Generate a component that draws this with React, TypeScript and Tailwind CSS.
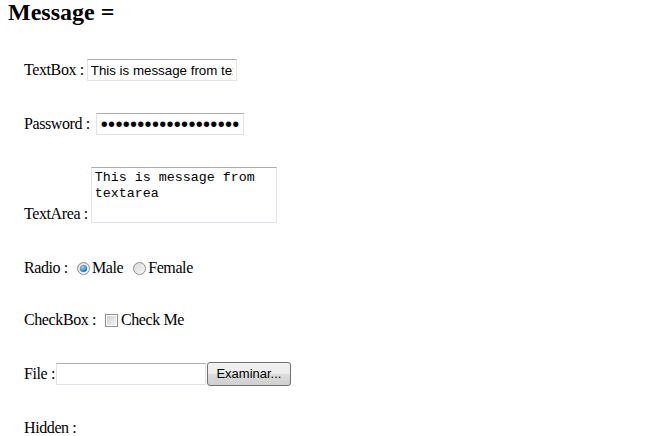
const label = "whitespace-pre leading-[18px] tracking-[-0.4px]";
const field =
  "border border-[#e2e3ea] border-t-[#abadb3] bg-white text-black outline-none";

function Radio({ checked }: { checked?: boolean }) {
  return (
    <span className="flex h-[13px] w-[13px] shrink-0 items-center justify-center rounded-full border border-[#8e8f8f] bg-[linear-gradient(135deg,#d7d7d7,#f8f8f8)]">
      {checked && (
        <span className="h-[7px] w-[7px] rounded-full bg-[radial-gradient(circle_at_40%_35%,#9fdcf8,#2a8ac4_55%,#0d4f80)]" />
      )}
    </span>
  );
}

export default function App() {
  return (
    <div className="h-[436px] w-[650px] overflow-hidden bg-white px-2 font-['Liberation_Serif','Times_New_Roman',serif] text-[16px] text-black">
      <h2 className="text-[24px] font-bold leading-[24px]">Message =</h2>

      <div className="ml-4 flex flex-col">
        <div className="mt-[35px] flex h-[22px] items-center">
          <span className={label}>TextBox :</span>
          <input
            readOnly
            value="This is message from textbox"
            className={`${field} ml-[3px] h-[22px] w-[150px] px-[3px] font-['Liberation_Sans',Arial,sans-serif] text-[13.33px]`}
          />
        </div>

        <div className="mt-[32px] flex h-[22px] items-center">
          <span className={label}>Password :</span>
          <input
            readOnly
            value={"•".repeat(19)}
            className={`${field} ml-[6px] h-[22px] w-[148px] pl-[4px] font-['Liberation_Sans',Arial,sans-serif] text-[20px] tracking-[0.3px]`}
          />
        </div>

        <div className="mt-[32px] flex h-[56px] items-end">
          <span className={label}>TextArea :</span>
          <textarea
            readOnly
            value="This is message from textarea"
            className={`${field} ml-[3px] h-[56px] w-[186px] resize-none overflow-hidden px-[3px] pt-[2px] font-['Liberation_Mono','Courier_New',monospace] text-[13.33px] leading-[16px]`}
          />
        </div>

        <div className="mt-[36px] flex h-[18px] items-center">
          <span className={label}>Radio :</span>
          <span className="ml-[9px]">
            <Radio checked />
          </span>
          <span className={`${label} ml-[2px]`}>Male</span>
          <span className="ml-[10px]">
            <Radio />
          </span>
          <span className={`${label} ml-[2px]`}>Female</span>
        </div>

        <div className="mt-[34px] flex h-[18px] items-center">
          <span className={label}>CheckBox :</span>
          <span className="ml-[9px] flex h-[13px] w-[13px] items-center justify-center border border-[#8e8f8f] bg-white">
            <span className="h-[9px] w-[9px] bg-[linear-gradient(135deg,#cfcfcf,#f4f4f4)]" />
          </span>
          <span className={`${label} ml-[3px]`}>Check Me</span>
        </div>

        <div className="mt-[33px] flex h-[24px] items-center">
          <span className={label}>File :</span>
          <input readOnly value="" className={`${field} ml-[1px] h-[22px] w-[150px]`} />
          <button className="ml-[1px] h-[24px] w-[84px] rounded-[3px] border border-[#707070] bg-[linear-gradient(#f2f2f2_0%,#ebebeb_50%,#dddddd_50%,#cfcfcf_100%)] font-['Liberation_Sans',Arial,sans-serif] text-[13px] text-black">
            Examinar...
          </button>
        </div>

        <div className="mt-[33px] flex h-[18px] items-center">
          <span className={label}>Hidden :</span>
        </div>
      </div>
    </div>
  );
}
